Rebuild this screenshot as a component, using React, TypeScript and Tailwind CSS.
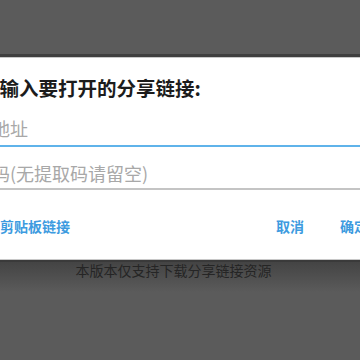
export default function App() {
  return (
    <div
      className="relative w-[360px] h-[360px] overflow-hidden bg-[#5b5b5b]"
      style={{ fontFamily: '"Noto Sans CJK SC", "Noto Sans", sans-serif' }}
    >
      <div className="flex flex-col">
        <div className="h-[54px] shrink-0" />
        {/* dialog (wider than the viewport, cropped at both sides) */}
        <div className="ml-[-44px] w-[428px] shrink-0 bg-white border-t-[3px] border-b-[3px] border-t-[#3f3f3f] border-b-[#3a3a3a] shadow-[0_0_0_1px_#c8c8c8_inset]">
          <div className="px-6 pt-[18px]">
            <div className="text-[19.5px] leading-[26px] font-bold text-[#1c1c1c]">
              请输入要打开的分享链接:
            </div>
            <div className="mt-[10px]">
              <div className="h-[34px] flex items-center text-[18px] text-[#a8a8a8] ml-[-60px]">
                分享链接地址
              </div>
              <div className="h-[2px] bg-[#5fb3ea] mr-[-24px]" />
            </div>
            <div className="mt-[11px]">
              <div className="h-[30px] flex items-center text-[18px] text-[#a8a8a8] ml-[-24px]">
                提取码(无提取码请留空)
              </div>
              <div className="h-[2px] bg-[#c4c4c4] mr-[-24px]" />
            </div>
          </div>
          <div className="flex items-center h-[70px] pt-[3px] pr-2 text-[14px] font-bold text-[#3d9be0]">
            <span className="ml-[44px]">剪贴板链接</span>
            <div className="flex-1" />
            <span className="mr-[36px]">取消</span>
            <span className="mr-[8px]">确定</span>
          </div>
        </div>
        <div className="h-[30px] -mt-px bg-gradient-to-b from-[#444444] to-[#5b5b5b] flex justify-center">
          <span className="-mt-[2px] mr-[13px] text-[14px] leading-[20px] text-[#252525]">
            本版本仅支持下载分享链接资源
          </span>
        </div>
      </div>
    </div>
  )
}
